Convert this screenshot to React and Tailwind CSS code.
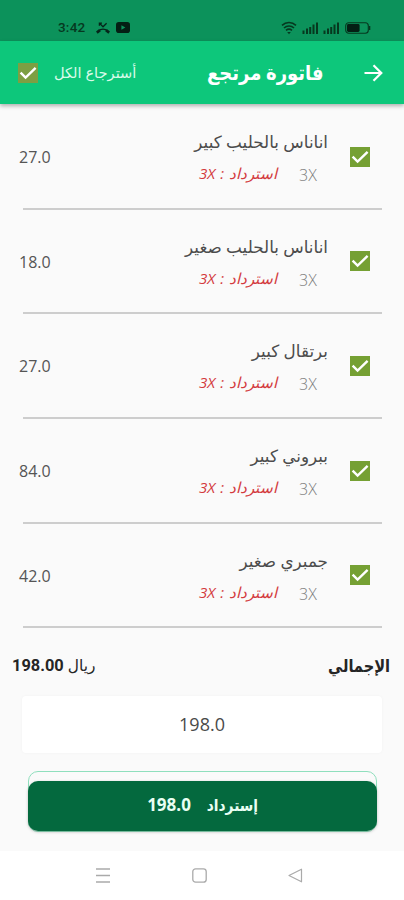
import { useState } from "react"

const items = [
  { name: "اناناس بالحليب كبير", qty: 3, price: "27.0" },
  { name: "اناناس بالحليب صغير", qty: 3, price: "18.0" },
  { name: "برتقال كبير", qty: 3, price: "27.0" },
  { name: "ببروني كبير", qty: 3, price: "84.0" },
  { name: "جمبري صغير", qty: 3, price: "42.0" },
]

function Check({ checked, onClick, className }) {
  return (
    <button onClick={onClick} className={`flex size-5 shrink-0 items-center justify-center ${className}`}>
      {checked && (
        <svg viewBox="0 0 20 20" className="size-5" fill="none" stroke="#fff" strokeWidth="2.4">
          <path d="M2.6 9.6l5 5L17.6 4.8" />
        </svg>
      )}
    </button>
  )
}

function Signal() {
  return (
    <svg width="17" height="12" viewBox="0 0 17 12" fill="#06381f">
      <rect x="0.5" y="8.5" width="2" height="3.5" />
      <rect x="4" y="6.5" width="2" height="5.5" />
      <rect x="7.2" y="5" width="2" height="7" />
      <rect x="10.5" y="2.5" width="2" height="9.5" />
      <rect x="14" y="0.5" width="2" height="11.5" />
    </svg>
  )
}

function StatusBar() {
  return (
    <div dir="ltr" className="flex h-[41px] items-center bg-[#0c925b] pt-[14px] pr-[33px] pl-[58px] text-[#06381f]">
      <span className="w-[28px] text-[13.5px] leading-none tracking-[0.2px] whitespace-nowrap font-['Roboto',sans-serif] font-medium">3:42</span>
      <svg width="14" height="12" viewBox="0 0 14 12" className="ml-[10px]" fill="none" stroke="#06251a">
        <path d="M3.4 3.8V1.2H6M3.6 1.4L7 4.8l3.6-3.6" strokeWidth="1.3" />
        <path d="M2.4 9C5 6.6 9 6.6 11.6 9" strokeWidth="1.2" />
        <path d="M0.8 10.6l3.2-2.4M13.2 10.6L10 8.2" strokeWidth="2.8" />
      </svg>
      <svg width="14" height="11" viewBox="0 0 14 11" className="ml-[6px]">
        <rect width="14" height="11" rx="2.8" fill="#041f14" />
        <path d="M5.4 3.2v4.6l4-2.3z" fill="#0c925b" />
      </svg>
      <div className="ml-auto flex items-center">
        <svg width="16" height="14" viewBox="0 0 16 14" fill="none" stroke="#06381f" strokeWidth="1.6">
          <path d="M1 4.4C5 0.6 11 0.6 15 4.4M3 7c2.8-2.6 7.2-2.6 10 0M5 9.4c1.8-1.5 4.2-1.5 6 0" />
          <path d="M6.2 11h3.6L8 13.2z" fill="#06381f" stroke="none" />
        </svg>
        <span className="ml-[5px]"><Signal /></span>
        <span className="ml-[4px]"><Signal /></span>
        <svg width="26" height="12" viewBox="0 0 26 12" className="ml-[5px]">
          <rect x="0.7" y="0.7" width="22.6" height="10.6" rx="3" fill="none" stroke="#06381f" strokeWidth="1.1" />
          <rect x="2" y="2" width="12.6" height="8" rx="1.4" fill="#041f14" />
          <path d="M24.6 4v4" stroke="#06381f" strokeWidth="1.4" />
        </svg>
      </div>
    </div>
  )
}

function Item({ item, checked, onToggle }) {
  return (
    <div className="h-[104.7px]">
      <div className="flex h-full items-start pr-[34px] pl-[19px]">
        <Check checked={checked} onClick={onToggle} className="mt-[42.5px] bg-[#75a033]" />
        <div className="mt-[25px] mr-[22px] flex-1">
          <p className="h-[26px] text-[16.8px] leading-[26px] whitespace-nowrap text-[#4c4c4c]">{item.name}</p>
          <div className="mt-[9px] mr-[11px] flex h-[22px] items-center whitespace-nowrap">
            <span dir="ltr" className="w-[18px] text-[16px] text-[#7c7c7c] font-['Open_Sans',sans-serif] font-light">{item.qty}X</span>
            <span className="mr-[22px] -mt-[3px] text-[15.2px] [word-spacing:1px] text-[#d3393d] italic">استرداد : {item.qty}X</span>
          </div>
        </div>
        <span className="mt-[41px] text-[16px] leading-[24px] text-[#555]">{item.price}</span>
      </div>
      <div className="mr-[22px] ml-[23px] -mt-px h-[2px] bg-[#cdcdcd]" />
    </div>
  )
}

export default function App() {
  const [selected, setSelected] = useState(items.map(() => true))
  const all = selected.every(Boolean)

  return (
    <div dir="rtl" className="flex h-[900px] w-[404px] flex-col overflow-hidden bg-[#fafafa] font-['Open_Sans','DejaVu_Sans',sans-serif]">
      <StatusBar />
      <header className="flex h-[63px] shrink-0 items-center bg-[#0dc77b] pr-[21px] pl-[18px] text-white shadow-[0_2px_4px_rgba(0,0,0,0.3)]">
        <svg width="19" height="18" viewBox="0 0 19 18" fill="none" stroke="#fff" strokeWidth="2.2">
          <path d="M0.5 9H17M9.5 1.2L17.3 9l-7.8 7.8" />
        </svg>
        <h1 className="mr-[40px] origin-right scale-x-90 text-[20px] font-bold whitespace-nowrap">فاتورة مرتجع</h1>
        <span className="mr-auto text-[14.6px] whitespace-nowrap text-[#d9fbe9]">أسترجاع الكل</span>
        <Check checked={all} onClick={() => setSelected(items.map(() => !all))} className="mr-[16px] bg-[#7d9f43]" />
      </header>

      <main className="h-[524px] shrink-0">
        {items.map((item, i) => (
          <Item
            key={i}
            item={item}
            checked={selected[i]}
            onToggle={() => setSelected(selected.map((s, j) => (j === i ? !s : s)))}
          />
        ))}
      </main>

      <section className="flex h-[68px] shrink-0 items-center justify-between pt-[8px] pr-[14px] pl-[12px] text-[#252525]">
        <span className="origin-right scale-x-[.86] text-[17px] font-semibold">الإجمالي</span>
        <span dir="ltr" className="flex items-center gap-[4px] text-[16px]">
          <b className="text-[16.4px] font-bold font-['Roboto',sans-serif]">198.00</b>
          <span className="text-[15.4px]">ريال</span>
        </span>
      </section>

      <div className="mx-[22px] flex h-[57px] shrink-0 items-center justify-center rounded-[4px] bg-white text-[18px] text-[#4a4a4a] shadow-[0_0_3px_rgba(0,0,0,0.04)]">
        198.0
      </div>

      <div className="mr-[27px] ml-[28px] mt-[18px] h-[61px] shrink-0 rounded-[10px] border border-[#8fdfbd] pt-[9px]">
        <button className="-mx-px flex h-[50px] w-[349px] items-center justify-center rounded-[10px] bg-[#04693e] pb-[2px] text-[17px] font-bold text-[#e9fff3] shadow-[0_1px_3px_rgba(0,0,0,0.25)]">
          <span className="w-[51px] origin-right scale-x-[.86] text-[16px] whitespace-nowrap">إسترداد</span>
          <span className="mr-[16px]">198.0</span>
        </button>
      </div>

      <nav dir="ltr" className="mt-auto flex h-[49px] shrink-0 items-center bg-white pl-[96px]">
        <svg width="14" height="15" viewBox="0 0 14 15" stroke="#aaa" strokeWidth="1.3">
          <path d="M0 1h14M0 7.5h14M0 14h14" />
        </svg>
        <svg width="15" height="15" viewBox="0 0 15 15" className="ml-[82px]" fill="none" stroke="#aaa" strokeWidth="1.3">
          <rect x="0.8" y="0.8" width="13.4" height="13.4" rx="2.8" />
        </svg>
        <svg width="15" height="15" viewBox="0 0 15 15" className="ml-[81px]" fill="none" stroke="#aaa" strokeWidth="1.2">
          <path d="M13.5 1.2v12.6L1 7.5z" strokeLinejoin="round" />
        </svg>
      </nav>
    </div>
  )
}
